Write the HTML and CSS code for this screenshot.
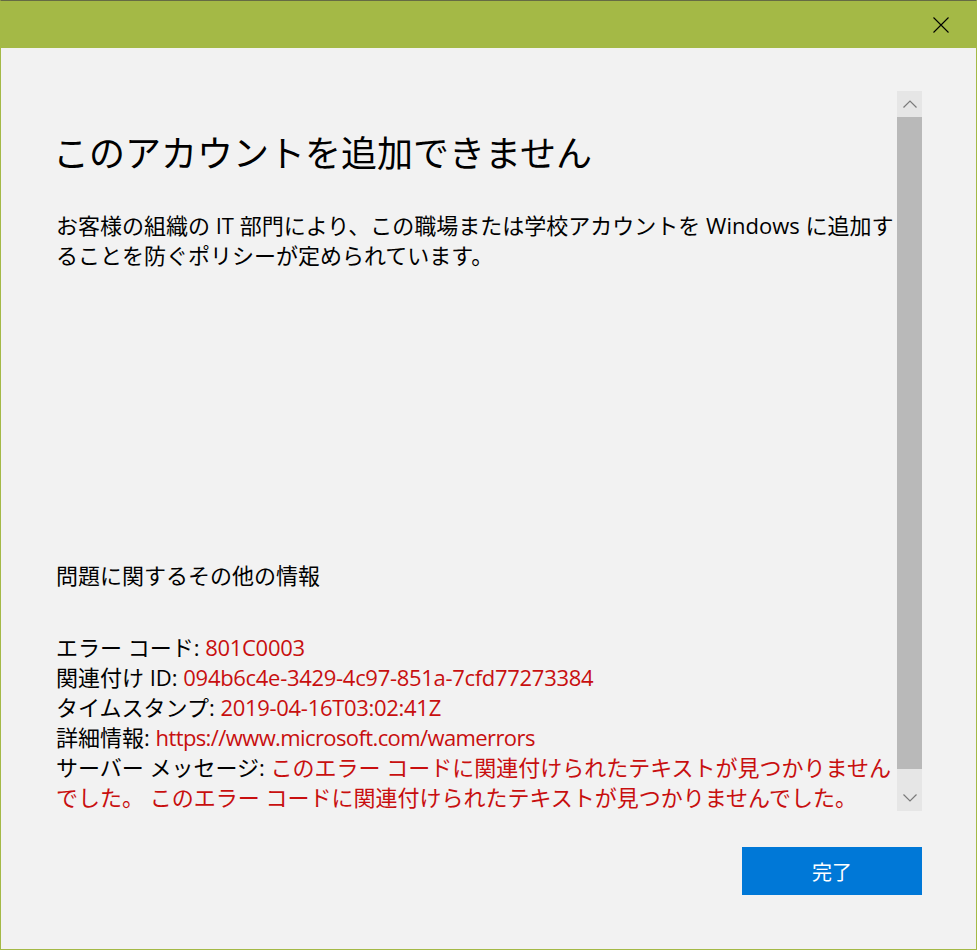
FILE: index.html
```html
<!DOCTYPE html>
<html lang="ja">
<head>
<meta charset="utf-8">
<title>このアカウントを追加できません</title>
<link rel="stylesheet" href="styles.css">
</head>
<body>
<div class="window">
  <div class="titlebar">
    <button class="close" aria-label="閉じる">
      <svg width="16" height="16" viewBox="0 0 16 16"><path d="M0.5 0.5 L15.5 15.5 M15.5 0.5 L0.5 15.5" stroke="#000" stroke-width="1.1" fill="none"/></svg>
    </button>
  </div>
  <div class="main">
    <div class="scroll">
      <div class="content">
        <h1 class="heading">このアカウントを追加できません</h1>
        <p class="desc">お客様の組織の IT 部門により、この職場または学校アカウントを Windows に追加することを防ぐポリシーが定められています。</p>
        <p class="more">問題に関するその他の情報</p>
        <div class="info">
          <div>エラー コード: <span class="err lat">801C0003</span></div>
          <div>関連付け ID: <span class="err lat">094b6c4e-3429-4c97-851a-7cfd77273384</span></div>
          <div>タイムスタンプ: <span class="err lat">2019-04-16T03:02:41Z</span></div>
          <div>詳細情報: <span class="err lat url">https://www.microsoft.com/wamerrors</span></div>
          <div>サーバー メッセージ: <span class="err">このエラー コードに関連付けられたテキストが見つかりませんでした。 このエラー コードに関連付けられたテキストが見つかりませんでした。</span></div>
        </div>
      </div>
      <div class="scrollbar">
        <div class="arrow up"><svg width="14" height="8" viewBox="0 0 14 8"><path d="M0.5 7.5 L7 1 L13.5 7.5" stroke="#7a7a7a" stroke-width="1.2" fill="none"/></svg></div>
        <div class="thumb"></div>
        <div class="track"></div>
        <div class="arrow down"><svg width="14" height="8" viewBox="0 0 14 8"><path d="M0.5 0.5 L7 7 L13.5 0.5" stroke="#7a7a7a" stroke-width="1.2" fill="none"/></svg></div>
      </div>
    </div>
    <div class="actions">
      <button class="done">完了</button>
    </div>
  </div>
</div>
</body>
</html>
```

FILE: styles.css
```css
html, body {
  margin: 0;
  padding: 0;
  background: #f2f2f2;
}
body {
  font-family: "Open Sans", "Noto Sans CJK JP", sans-serif;
  color: #000;
}
.window {
  width: 977px;
  height: 950px;
  box-sizing: border-box;
  border: 1px solid #a4b946;
  border-top: 1px solid #656b44;
  display: flex;
  flex-direction: column;
  background: #f2f2f2;
}
.titlebar {
  height: 47px;
  background: #a4b946;
  display: flex;
  justify-content: flex-end;
  align-items: flex-start;
}
.close {
  width: 48px;
  height: 48px;
  margin-top: -1px;
  margin-right: 11px;
  border: 0;
  padding: 0;
  background: transparent;
  display: flex;
  align-items: center;
  justify-content: center;
  padding-top: 1px;
}
.main {
  flex: 1;
  display: flex;
  flex-direction: column;
}
.scroll {
  margin-top: 43px;
  height: 720px;
  display: flex;
}
.content {
  width: 896px;
  padding-left: 55px;
  box-sizing: border-box;
  overflow: hidden;
}
.heading {
  margin: 39px 0 0 -3px;
  font-weight: normal;
  font-size: 36px;
  line-height: 48px;
}
.desc {
  margin: 32px 0 0;
  font-size: 22px;
  line-height: 30px;
}
.more {
  margin: 290px 0 0;
  font-size: 22px;
  line-height: 30px;
}
.info {
  margin-top: 42px;
  font-size: 22px;
  line-height: 30px;
}
.err {
  color: #c80f0f;
}
.lat {
  letter-spacing: -0.3px;
}
.url {
  letter-spacing: -0.6px;
}
.scrollbar {
  width: 25px;
  background: #e6e6e6;
  display: flex;
  flex-direction: column;
}
.arrow {
  height: 26px;
  display: flex;
  align-items: center;
  justify-content: center;
}
.thumb {
  height: 652px;
  background: #b9b9b9;
}
.track {
  flex: 1;
}
.actions {
  display: flex;
  justify-content: flex-end;
  padding-right: 54px;
  margin-top: 36px;
}
.done {
  width: 180px;
  height: 48px;
  border: 0;
  background: #0078d7;
  color: #fff;
  font-family: "Open Sans", "Noto Sans CJK JP", sans-serif;
  font-size: 20px;
}
```
